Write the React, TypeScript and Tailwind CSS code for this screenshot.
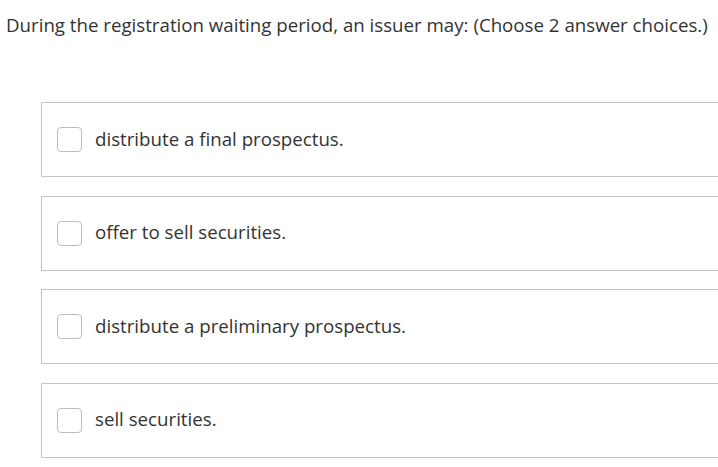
import React from 'react';

const options = [
  'distribute a final prospectus.',
  'offer to sell securities.',
  'distribute a preliminary prospectus.',
  'sell securities.',
];

const App: React.FC = () => {
  return (
    <div className="w-[718px] h-[467px] overflow-hidden bg-white text-[#333333]" style={{ fontFamily: '"Open Sans", sans-serif' }}>
      <p className="pl-[6px] pt-[12px] text-[18.7px] leading-[26px] whitespace-nowrap">
        During the registration waiting period, an issuer may: (Choose 2 answer choices.)
      </p>

      <div className="mt-[64px] ml-[41px] flex flex-col gap-[18.6px]">
        {options.map((opt, i) => (
          <label
            key={i}
            className="w-[720px] h-[75px] border border-[#c4c4c4] flex items-center cursor-pointer"
          >
            <span className="ml-[15px] w-[25px] h-[25px] border border-[#bdbdbd] rounded-[4px] bg-white shrink-0" />
            <span className="ml-[13px] text-[18.7px] leading-[26px] text-[#333333] -mt-[2px]">{opt}</span>
          </label>
        ))}
      </div>
    </div>
  );
};

export default App;
